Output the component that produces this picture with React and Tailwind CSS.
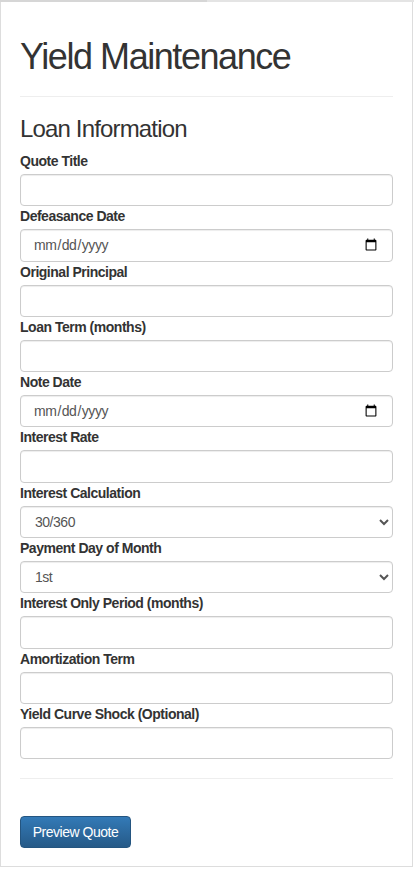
import React from 'react';

const fields = [
  { label: 'Quote Title', type: 'text' },
  { label: 'Defeasance Date', type: 'date' },
  { label: 'Original Principal', type: 'text' },
  { label: 'Loan Term (months)', type: 'text' },
  { label: 'Note Date', type: 'date' },
  { label: 'Interest Rate', type: 'text' },
  { label: 'Interest Calculation', type: 'select', options: ['30/360', 'Actual/360', 'Actual/365'] },
  { label: 'Payment Day of Month', type: 'select', options: ['1st', '5th', '10th', '15th'] },
  { label: 'Interest Only Period (months)', type: 'text' },
  { label: 'Amortization Term', type: 'text' },
  { label: 'Yield Curve Shock (Optional)', type: 'text' },
];

const inputCls =
  'block w-full h-[32.3px] text-[14px] text-[#555] bg-white border border-[#ccc] rounded-[4px] shadow-[inset_0_1px_1px_rgba(0,0,0,0.075)] focus:outline-none';

export default function App() {
  return (
    <div className="w-[414px] min-h-[869px] bg-white font-['Liberation_Sans',Arial,sans-serif] text-[#333] tracking-[-0.03em]">
      {/* top strip */}
      <div className="flex h-[2px]">
        <div className="w-[207px] bg-[#d6d6d6]"></div>
        <div className="flex-1 bg-[#e4e4e4]"></div>
      </div>

      <div className="w-[413px] border border-t-0 border-[#ddd] px-[19px] pt-[35px] pb-[18px]">
        <h1 className="text-[36px] leading-[39.6px] font-normal tracking-[-0.04em]">Yield Maintenance</h1>
        <hr className="mt-[19px] border-t border-[#eee]" />

        <h3 className="mt-[19px] mb-[9px] text-[24px] leading-[26.4px] font-normal tracking-[-0.035em]">Loan Information</h3>

        <form onSubmit={(e) => e.preventDefault()}>
          {fields.map((f) => (
            <div key={f.label}>
              <label className="block text-[14px] leading-[20px] font-bold mb-[3px]">{f.label}</label>
              {f.type === 'select' ? (
                <select className={inputCls + ' pl-[10px] pr-3'} defaultValue={f.options[0]}>
                  {f.options.map((o) => (
                    <option key={o}>{o}</option>
                  ))}
                </select>
              ) : (
                <input type={f.type} className={inputCls + ' px-3'} />
              )}
            </div>
          ))}

          <hr className="mt-[19px] border-t border-[#eee]" />

          <button
            type="submit"
            className="mt-[37px] h-[32px] w-[111px] rounded-[4px] border border-[#245580] bg-gradient-to-b from-[#337ab7] to-[#265a88] text-[14px] text-white"
          >
            Preview Quote
          </button>
        </form>
      </div>
    </div>
  );
}
